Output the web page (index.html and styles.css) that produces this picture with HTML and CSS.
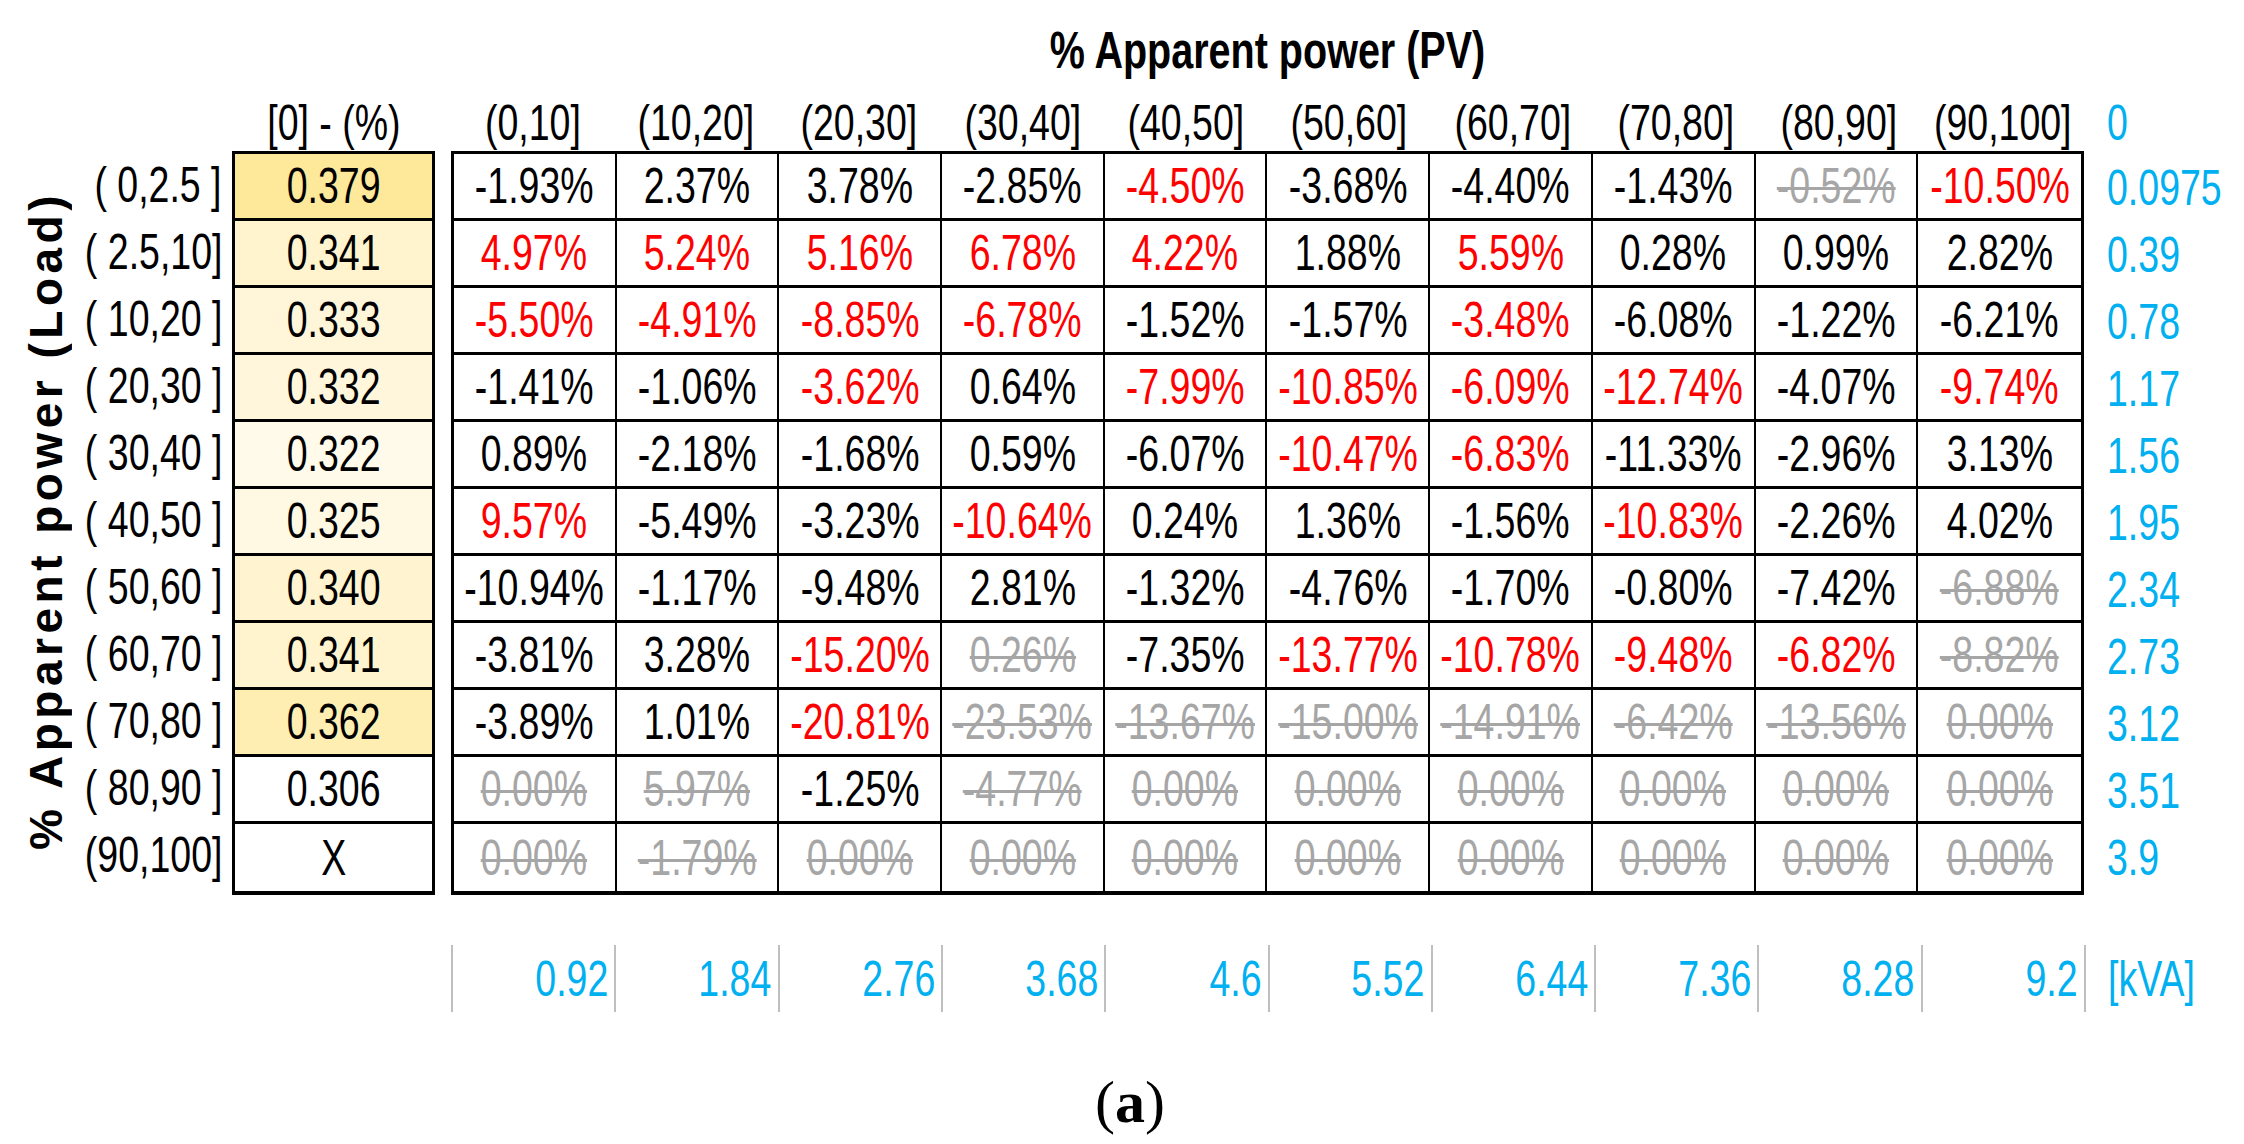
FILE: index.html
```html
<!DOCTYPE html>
<html>
<head>
<meta charset="utf-8">
<link rel="stylesheet" href="styles.css">
</head>
<body>
<div class="figure">
  <div class="title-row"><div class="title"><span class="t">% Apparent power (PV)</span></div></div>
  <div class="body">
    <div class="vlabel-col"><div class="vlabel">% Apparent power (Load)</div></div>
    <div class="rowlabels">
      <div class="hdr"></div>
      <div class="rl"><span class="t">( 0,2.5 ]</span></div>
      <div class="rl"><span class="t">( 2.5,10]</span></div>
      <div class="rl"><span class="t">( 10,20 ]</span></div>
      <div class="rl"><span class="t">( 20,30 ]</span></div>
      <div class="rl"><span class="t">( 30,40 ]</span></div>
      <div class="rl"><span class="t">( 40,50 ]</span></div>
      <div class="rl"><span class="t">( 50,60 ]</span></div>
      <div class="rl"><span class="t">( 60,70 ]</span></div>
      <div class="rl"><span class="t">( 70,80 ]</span></div>
      <div class="rl"><span class="t">( 80,90 ]</span></div>
      <div class="rl"><span class="t">(90,100]</span></div>
    </div>
    <div class="ycol">
      <div class="hdr"><span class="t">[0] - (%)</span></div>
      <div class="ybox">
        <div class="yc" style="background:#FEE89A"><span class="t">0.379</span></div>
        <div class="yc" style="background:#FFF4CE"><span class="t">0.341</span></div>
        <div class="yc" style="background:#FFF6D9"><span class="t">0.333</span></div>
        <div class="yc" style="background:#FFF6DB"><span class="t">0.332</span></div>
        <div class="yc" style="background:#FFFAE9"><span class="t">0.322</span></div>
        <div class="yc" style="background:#FFF9E4"><span class="t">0.325</span></div>
        <div class="yc" style="background:#FFF4CF"><span class="t">0.340</span></div>
        <div class="yc" style="background:#FFF4CE"><span class="t">0.341</span></div>
        <div class="yc" style="background:#FFEEB2"><span class="t">0.362</span></div>
        <div class="yc" style="background:#FFFFFF"><span class="t">0.306</span></div>
        <div class="yc" style="background:#FFFFFF"><span class="t">X</span></div>
      </div>
    </div>
    <div class="main">
      <div class="colheads">
        <div class="hdr"><span class="t">(0,10]</span></div><div class="hdr"><span class="t">(10,20]</span></div><div class="hdr"><span class="t">(20,30]</span></div><div class="hdr"><span class="t">(30,40]</span></div><div class="hdr"><span class="t">(40,50]</span></div>
        <div class="hdr"><span class="t">(50,60]</span></div><div class="hdr"><span class="t">(60,70]</span></div><div class="hdr"><span class="t">(70,80]</span></div><div class="hdr"><span class="t">(80,90]</span></div><div class="hdr"><span class="t">(90,100]</span></div>
      </div>
      <div class="grid">
        <div class="c"><span class="t">-1.93%</span></div><div class="c"><span class="t">2.37%</span></div><div class="c"><span class="t">3.78%</span></div><div class="c"><span class="t">-2.85%</span></div><div class="c r"><span class="t">-4.50%</span></div><div class="c"><span class="t">-3.68%</span></div><div class="c"><span class="t">-4.40%</span></div><div class="c"><span class="t">-1.43%</span></div><div class="c g"><span class="t">-0.52%</span></div><div class="c r"><span class="t">-10.50%</span></div>
        <div class="c r"><span class="t">4.97%</span></div><div class="c r"><span class="t">5.24%</span></div><div class="c r"><span class="t">5.16%</span></div><div class="c r"><span class="t">6.78%</span></div><div class="c r"><span class="t">4.22%</span></div><div class="c"><span class="t">1.88%</span></div><div class="c r"><span class="t">5.59%</span></div><div class="c"><span class="t">0.28%</span></div><div class="c"><span class="t">0.99%</span></div><div class="c"><span class="t">2.82%</span></div>
        <div class="c r"><span class="t">-5.50%</span></div><div class="c r"><span class="t">-4.91%</span></div><div class="c r"><span class="t">-8.85%</span></div><div class="c r"><span class="t">-6.78%</span></div><div class="c"><span class="t">-1.52%</span></div><div class="c"><span class="t">-1.57%</span></div><div class="c r"><span class="t">-3.48%</span></div><div class="c"><span class="t">-6.08%</span></div><div class="c"><span class="t">-1.22%</span></div><div class="c"><span class="t">-6.21%</span></div>
        <div class="c"><span class="t">-1.41%</span></div><div class="c"><span class="t">-1.06%</span></div><div class="c r"><span class="t">-3.62%</span></div><div class="c"><span class="t">0.64%</span></div><div class="c r"><span class="t">-7.99%</span></div><div class="c r"><span class="t">-10.85%</span></div><div class="c r"><span class="t">-6.09%</span></div><div class="c r"><span class="t">-12.74%</span></div><div class="c"><span class="t">-4.07%</span></div><div class="c r"><span class="t">-9.74%</span></div>
        <div class="c"><span class="t">0.89%</span></div><div class="c"><span class="t">-2.18%</span></div><div class="c"><span class="t">-1.68%</span></div><div class="c"><span class="t">0.59%</span></div><div class="c"><span class="t">-6.07%</span></div><div class="c r"><span class="t">-10.47%</span></div><div class="c r"><span class="t">-6.83%</span></div><div class="c"><span class="t">-11.33%</span></div><div class="c"><span class="t">-2.96%</span></div><div class="c"><span class="t">3.13%</span></div>
        <div class="c r"><span class="t">9.57%</span></div><div class="c"><span class="t">-5.49%</span></div><div class="c"><span class="t">-3.23%</span></div><div class="c r"><span class="t">-10.64%</span></div><div class="c"><span class="t">0.24%</span></div><div class="c"><span class="t">1.36%</span></div><div class="c"><span class="t">-1.56%</span></div><div class="c r"><span class="t">-10.83%</span></div><div class="c"><span class="t">-2.26%</span></div><div class="c"><span class="t">4.02%</span></div>
        <div class="c"><span class="t">-10.94%</span></div><div class="c"><span class="t">-1.17%</span></div><div class="c"><span class="t">-9.48%</span></div><div class="c"><span class="t">2.81%</span></div><div class="c"><span class="t">-1.32%</span></div><div class="c"><span class="t">-4.76%</span></div><div class="c"><span class="t">-1.70%</span></div><div class="c"><span class="t">-0.80%</span></div><div class="c"><span class="t">-7.42%</span></div><div class="c g"><span class="t">-6.88%</span></div>
        <div class="c"><span class="t">-3.81%</span></div><div class="c"><span class="t">3.28%</span></div><div class="c r"><span class="t">-15.20%</span></div><div class="c g"><span class="t">0.26%</span></div><div class="c"><span class="t">-7.35%</span></div><div class="c r"><span class="t">-13.77%</span></div><div class="c r"><span class="t">-10.78%</span></div><div class="c r"><span class="t">-9.48%</span></div><div class="c r"><span class="t">-6.82%</span></div><div class="c g"><span class="t">-8.82%</span></div>
        <div class="c"><span class="t">-3.89%</span></div><div class="c"><span class="t">1.01%</span></div><div class="c r"><span class="t">-20.81%</span></div><div class="c g"><span class="t">-23.53%</span></div><div class="c g"><span class="t">-13.67%</span></div><div class="c g"><span class="t">-15.00%</span></div><div class="c g"><span class="t">-14.91%</span></div><div class="c g"><span class="t">-6.42%</span></div><div class="c g"><span class="t">-13.56%</span></div><div class="c g"><span class="t">0.00%</span></div>
        <div class="c g"><span class="t">0.00%</span></div><div class="c g"><span class="t">5.97%</span></div><div class="c"><span class="t">-1.25%</span></div><div class="c g"><span class="t">-4.77%</span></div><div class="c g"><span class="t">0.00%</span></div><div class="c g"><span class="t">0.00%</span></div><div class="c g"><span class="t">0.00%</span></div><div class="c g"><span class="t">0.00%</span></div><div class="c g"><span class="t">0.00%</span></div><div class="c g"><span class="t">0.00%</span></div>
        <div class="c g"><span class="t">0.00%</span></div><div class="c g"><span class="t">-1.79%</span></div><div class="c g"><span class="t">0.00%</span></div><div class="c g"><span class="t">0.00%</span></div><div class="c g"><span class="t">0.00%</span></div><div class="c g"><span class="t">0.00%</span></div><div class="c g"><span class="t">0.00%</span></div><div class="c g"><span class="t">0.00%</span></div><div class="c g"><span class="t">0.00%</span></div><div class="c g"><span class="t">0.00%</span></div>
      </div>
    </div>
    <div class="rcol">
      <div class="hdr"><span class="t">0</span></div>
      <div class="rv"><span class="t">0.0975</span></div>
      <div class="rv"><span class="t">0.39</span></div>
      <div class="rv"><span class="t">0.78</span></div>
      <div class="rv"><span class="t">1.17</span></div>
      <div class="rv"><span class="t">1.56</span></div>
      <div class="rv"><span class="t">1.95</span></div>
      <div class="rv"><span class="t">2.34</span></div>
      <div class="rv"><span class="t">2.73</span></div>
      <div class="rv"><span class="t">3.12</span></div>
      <div class="rv"><span class="t">3.51</span></div>
      <div class="rv"><span class="t">3.9</span></div>
    </div>
  </div>
  <div class="axis">
    <div class="ticks">
      <div class="tk"><span class="t">0.92</span></div><div class="tk"><span class="t">1.84</span></div><div class="tk"><span class="t">2.76</span></div><div class="tk"><span class="t">3.68</span></div><div class="tk"><span class="t">4.6</span></div>
      <div class="tk"><span class="t">5.52</span></div><div class="tk"><span class="t">6.44</span></div><div class="tk"><span class="t">7.36</span></div><div class="tk"><span class="t">8.28</span></div><div class="tk"><span class="t">9.2</span></div>
    </div>
    <div class="unit"><span class="t">[kVA]</span></div>
  </div>
  <div class="caption">(<b>a</b>)</div>
</div>
</body>
</html>
```

FILE: styles.css
```css
html, body {
  margin: 0;
  padding: 0;
  background: #ffffff;
}
.figure {
  width: 2244px;
  height: 1144px;
  font-family: "Liberation Sans", Arial, sans-serif;
  font-size: 50px;
  color: #000;
  display: flex;
  flex-direction: column;
  overflow: hidden;
}
.t {
  display: inline-block;
  white-space: pre;
  transform: scaleX(0.75);
  transform-origin: 50% 50%;
}
.title-row {
  height: 95px;
  display: flex;
  align-items: center;
  padding-left: 451px;
  box-sizing: border-box;
  flex: none;
}
.title {
  width: 1633px;
  text-align: center;
  font-weight: bold;
  font-size: 52px;
  padding-top: 4px;
  line-height: 1;
}
.title .t { transform: scaleX(0.76); }
.body {
  display: flex;
  align-items: flex-start;
  flex: none;
}
.body > * { flex: none; }
.hdr {
  height: 56px;
  display: flex;
  align-items: center;
  justify-content: center;
  white-space: pre;
  line-height: 1;
}
.vlabel-col {
  width: 92px;
  height: 795px;
  padding-top: 56px;
  box-sizing: border-box;
  display: flex;
  align-items: center;
  justify-content: center;
}
.vlabel {
  writing-mode: vertical-rl;
  transform: rotate(180deg);
  font-weight: bold;
  font-size: 46px;
  letter-spacing: 4.5px;
  white-space: nowrap;
  line-height: 1;
}
.rowlabels {
  width: 140px;
  display: flex;
  flex-direction: column;
}
.rl {
  height: 67px;
  display: flex;
  align-items: center;
  justify-content: flex-end;
  padding-right: 10px;
  line-height: 1;
}
.rl .t { transform-origin: 100% 50%; }
.rowlabels .rl:first-of-type { margin-top: 2px; }
.ycol {
  width: 203px;
  display: flex;
  flex-direction: column;
}
.ybox {
  border: 3px solid #000;
  border-bottom-width: 4px;
  display: flex;
  flex-direction: column;
}
.yc {
  height: 67px;
  box-sizing: border-box;
  border-bottom: 3px solid #000;
  display: flex;
  align-items: center;
  justify-content: center;
  line-height: 1;
}
.yc:last-child { border-bottom: 0; }
.main {
  width: 1633px;
  margin-left: 16px;
}
.colheads {
  display: grid;
  grid-template-columns: repeat(10, minmax(0, 1fr));
}
.grid {
  display: grid;
  grid-template-columns: repeat(10, minmax(0, 1fr));
  grid-auto-rows: 67px;
  border: 3px solid #000;
  border-bottom-width: 4px;
}
.c {
  box-sizing: border-box;
  border-right: 2px solid #000;
  border-bottom: 3px solid #000;
  display: flex;
  align-items: center;
  justify-content: center;
  line-height: 1;
  white-space: nowrap;
}
.c:nth-child(10n) { border-right: 0; }
.c:nth-last-child(-n+10) { border-bottom: 0; }
.r { color: #ff0000; }
.g { color: #a6a6a6; }
.g .t {
  text-decoration: line-through;
  text-decoration-thickness: 3px;
}
.rcol {
  margin-left: 23px;
  display: flex;
  flex-direction: column;
  color: #00b0f0;
}
.rcol .hdr { justify-content: flex-start; }
.rcol .t { transform-origin: 0 50%; }
.rv {
  height: 67px;
  display: flex;
  align-items: center;
  line-height: 1;
}
.rcol .rv:nth-child(2) { margin-top: 3px; }
.axis {
  display: flex;
  margin-top: 50px;
  padding-left: 451px;
  color: #00b0f0;
  flex: none;
}
.ticks {
  width: 1633px;
  flex: none;
  display: grid;
  grid-template-columns: repeat(10, minmax(0, 1fr));
  border-left: 2px solid #bfbfbf;
}
.tk {
  height: 67px;
  border-right: 2px solid #bfbfbf;
  display: flex;
  align-items: center;
  justify-content: flex-end;
  padding-right: 6px;
  line-height: 1;
}
.tk .t { transform-origin: 100% 50%; }
.unit {
  margin-left: 22px;
  height: 67px;
  display: flex;
  align-items: center;
  line-height: 1;
}
.unit .t { transform-origin: 0 50%; }
.caption {
  margin-top: 60px;
  text-align: center;
  font-family: "Liberation Serif", "Times New Roman", serif;
  font-size: 60px;
  line-height: 1;
  padding-left: 16px;
  flex: none;
}
.caption b { font-weight: bold; }
```
